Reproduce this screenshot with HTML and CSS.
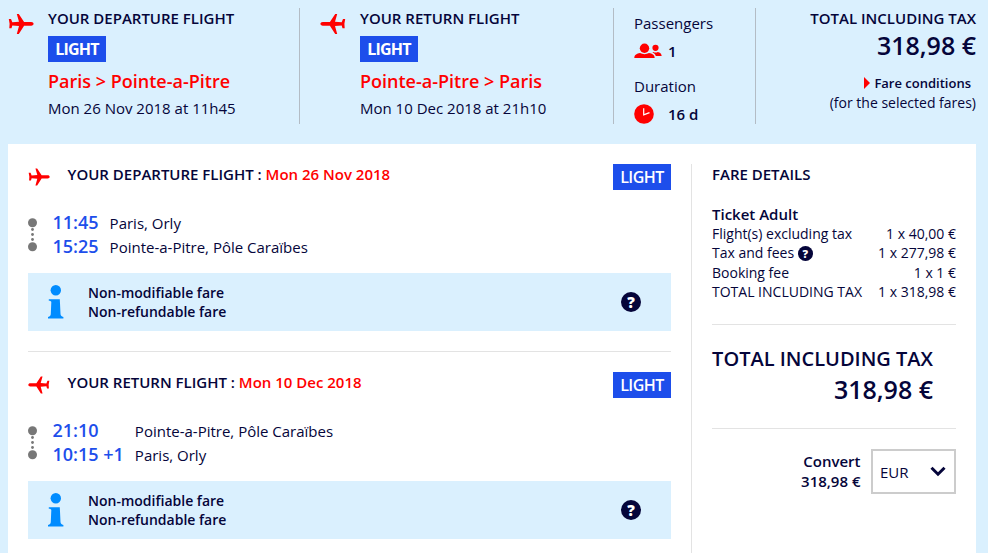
FILE: index.html
```html
<!doctype html>
<html lang="en">
<head>
  <meta charset="utf-8">

  <meta name="viewport" content="width=device-width, initial-scale=1">

  <title>Your flights</title>

  <link rel="stylesheet" href="styles.css">

</head>
<body>

  <svg class="sprite" width="0" height="0">
    <symbol id="plane" viewBox="0 0 26 20">
      <path d="M.8 5h2.200l1.300 3.300 6.700-.6L8.800 0h2l5.300 7.900h7.100c1.500 0 2.400.8 2.400 1.900s-.9 1.900-2.400 1.900h-7.100L10.800 20h-2L11 12l-6.700-.6-.8 2.800H1.300l.3-4.400z"/>
    </symbol>
    <symbol id="people" viewBox="0 0 28 16">
      <circle cx="10.500" cy="5.200" r="4.700"/>
      <path d="M.3 15c.2-3.300 2.600-4.200 5.700-4.900 2.500 1.500 6.500 1.500 9 0 3.100.7 5.500 1.600 5.700 4.900z"/>
      <circle cx="21.500" cy="4.800" r="3.100"/>
      <path d="M18.300 9.600l1.200-.7c1.400.8 3 .8 4.300 0 2.300.5 3.700 1.500 3.900 4.100h-5.900c-.6-1.800-1.700-2.800-3.500-3.400z"/>
    </symbol>
    <symbol id="info" viewBox="0 0 16 34">
      <circle cx="7.800" cy="5.300" r="5.200"/>
      <path d="M.8 14.300h11l.7 14.500c.1 1.900.8 2.500 2.900 3.200v1.500H0v-1.500c2.200-.7 2.700-1.300 2.800-3.200l.5-11.500c0-1-.8-1.500-2.500-1.500z"/>
    </symbol>
    <symbol id="steps" viewBox="0 0 9 34">
      <circle cx="4.500" cy="4.700" r="4.500"/>
      <circle cx="4.500" cy="11.500" r="1.400"/>
      <circle cx="4.500" cy="16.500" r="1.400"/>
      <circle cx="4.500" cy="21.500" r="1.400"/>
      <circle cx="4.500" cy="28.700" r="4.500"/>
    </symbol>
  </svg>

  <header class="summary">
    <section class="trip">
      <svg class="plane"><use href="#plane"/></svg>
      <div>
        <h2 class="title">YOUR DEPARTURE FLIGHT</h2>
        <span class="badge strong">LIGHT</span>
        <p class="route">Paris &gt; Pointe-a-Pitre</p>
        <p class="date">Mon 26 Nov 2018 at 11h45</p>
      </div>
    </section>
    <section class="trip trip-return">
      <svg class="plane flip"><use href="#plane"/></svg>
      <div>
        <h2 class="title">YOUR RETURN FLIGHT</h2>
        <span class="badge strong">LIGHT</span>
        <p class="route">Pointe-a-Pitre &gt; Paris</p>
        <p class="date">Mon 10 Dec 2018 at 21h10</p>
      </div>
    </section>
    <section class="infos">
      <p>Passengers</p>
      <p class="value"><svg class="people"><use href="#people"/></svg>1</p>
      <p class="duration">Duration</p>
      <p class="value">
        <svg class="clock" viewBox="0 0 20 20"><circle cx="10" cy="10" r="9.800"/><path d="M9.700 4.200v6.600l5.800-2.200"/></svg>16 d
      </p>
    </section>
    <section class="total">
      <h2 class="title">TOTAL INCLUDING TAX</h2>
      <p class="amount">318,98 €</p>
      <p class="conditions"><a href="#">Fare conditions</a></p>
      <p class="selected">(for the selected fares)</p>
    </section>
  </header>

  <main class="panel">
    <div class="flights">
      <section class="flight">
        <div class="flight-head">
          <svg class="plane"><use href="#plane"/></svg>
          <h3 class="title">YOUR DEPARTURE FLIGHT : <span class="red">Mon 26 Nov 2018</span></h3>
          <span class="badge">LIGHT</span>
        </div>
        <div class="steps">
          <svg class="line"><use href="#steps"/></svg>
          <div class="times"><div>11:45</div><div>15:25</div></div>
          <div class="places"><div>Paris, Orly</div><div>Pointe-a-Pitre, Pôle Caraïbes</div></div>
        </div>
        <div class="note">
          <svg class="info"><use href="#info"/></svg>
          <p>Non-modifiable fare<br>Non-refundable fare</p>
          <span class="help">?</span>
        </div>
      </section>

      <section class="flight">
        <div class="flight-head">
          <svg class="plane flip"><use href="#plane"/></svg>
          <h3 class="title">YOUR RETURN FLIGHT : <span class="red">Mon 10 Dec 2018</span></h3>
          <span class="badge">LIGHT</span>
        </div>
        <div class="steps">
          <svg class="line"><use href="#steps"/></svg>
          <div class="times"><div>21:10</div><div>10:15 +1</div></div>
          <div class="places"><div>Pointe-a-Pitre, Pôle Caraïbes</div><div>Paris, Orly</div></div>
        </div>
        <div class="note">
          <svg class="info"><use href="#info"/></svg>
          <p>Non-modifiable fare<br>Non-refundable fare</p>
          <span class="help">?</span>
        </div>
      </section>
    </div>

    <aside class="fare">
      <h3 class="title">FARE DETAILS</h3>
      <h4 class="ticket">Ticket Adult</h4>
      <dl class="prices">
        <dt>Flight(s) excluding tax</dt><dd>1 x 40,00 €</dd>
        <dt>Tax and fees <span class="help help-small">?</span></dt><dd>1 x 277,98 €</dd>
        <dt>Booking fee</dt><dd>1 x 1 €</dd>
        <dt>TOTAL INCLUDING TAX</dt><dd>1 x 318,98 €</dd>
      </dl>
      <div class="grand-total">
        <p>TOTAL INCLUDING TAX</p>
        <p class="amount">318,98 €</p>
      </div>
      <div class="convert">
        <p>Convert<br>318,98 €</p>
        <button class="currency">EUR
          <svg class="chevron" viewBox="0 0 16 11"><path d="M1.500 1.800L8 8.200l6.500-6.400"/></svg>
        </button>
      </div>
    </aside>
  </main>

</body>
</html>
```
FILE: styles.css
```css
* {
  box-sizing: border-box;
}

html {
  overflow: hidden;
}

body {
  margin: 0;
  padding: 8px 12px 0 8px;
  height: 553px;
  overflow: hidden;
  background: #daf0fe;
  color: #05053a;
  font: 15px/20px "Open Sans", sans-serif;
}

h2, h3, h4, p, dl, dd {
  margin: 0;
}

svg {
  display: block;
  flex: none;
  fill: red;
}

.sprite {
  position: absolute;
}

.title {
  font-size: 15px;
  font-weight: 600;
  line-height: 20px;
}

.red {
  color: red;
}

.badge {
  display: block;
  width: 58px;
  height: 26px;
  background: #1d4eeb;
  color: #fff;
  font-size: 16px;
  font-weight: 600;
  letter-spacing: -0.5px;
  line-height: 26px;
  text-align: center;
}

.strong {
  font-weight: 700;
  letter-spacing: -0.8px;
}

/* summary */

.summary {
  display: grid;
  grid-template-columns: 292px 314px 142px 1fr;
  height: 116px;
}

.trip {
  display: flex;
  border-right: 1px solid #b3bcc5;
}

.trip-return {
  padding-left: 20px;
}

.summary .plane {
  width: 26px;
  height: 20px;
  margin: 6px 14px 0 0;
}

.flip {
  transform: scaleX(-1);
}

.trip .badge {
  margin-top: 8px;
}

.route {
  margin-top: 7px;
  color: red;
  font-size: 18px;
  font-weight: 600;
  line-height: 24px;
}

.date {
  margin-top: 5px;
}

.infos {
  padding: 5px 0 0 20px;
  border-right: 1px solid #b3bcc5;
}

.value {
  display: flex;
  align-items: center;
  height: 20px;
  margin-top: 8px;
  font-weight: 600;
}

.people {
  width: 28px;
  height: 16px;
  margin-right: 6px;
}

.duration {
  margin-top: 15px;
}

.clock {
  width: 20px;
  height: 20px;
  margin-right: 14px;
}

.clock path {
  fill: none;
  stroke: #fff;
  stroke-width: 1.2;
}

.total {
  margin-right: -8px;
  padding-right: 8px;
  text-align: right;
}

.amount {
  font-size: 25px;
  font-weight: 600;
  line-height: 32px;
}

.total .amount {
  margin-top: 1px;
}

.conditions {
  margin-top: 13px;
  padding-right: 5px;
  font-size: 13px;
  font-weight: 600;
  line-height: 19px;
}

.conditions a {
  color: inherit;
  text-decoration: none;
}

.conditions a:before {
  content: '';
  display: inline-block;
  margin-right: 4px;
  border: 6px solid transparent;
  border-left-color: red;
  border-right: 0;
  vertical-align: -1px;
}

.selected {
  font-size: 14px;
}

/* panel */

.panel {
  display: flex;
  width: 968px;
  height: 420px;
  margin-top: 20px;
  padding: 20px 20px 0;
  background: #fff;
}

.flights {
  width: 643px;
  margin-right: 20px;
}

.flight {
  height: 187px;
}

.flight + .flight {
  height: auto;
  padding-top: 20px;
  border-top: 1px solid #e3e3e3;
}

.flight-head {
  display: flex;
  height: 26px;
}

.flight-head .plane {
  width: 22px;
  height: 18px;
  margin: 4px 17.500px 0 0;
}

.flight-head .badge {
  margin-left: auto;
}

.steps {
  display: flex;
  margin-top: 20px;
  line-height: 24px;
}

.line {
  width: 9px;
  height: 34px;
  margin: 8px 15.500px 0 0;
  fill: #777;
}

.times {
  margin-right: 11px;
  color: #1d4eeb;
  font-size: 18px;
  font-weight: 600;
}

.places {
  padding-top: 1px;
}

.note {
  display: flex;
  align-items: center;
  height: 58px;
  margin-top: 14px;
  padding: 0 30px 0 20px;
  background: #daf0fe;
  font-size: 14px;
  font-weight: 600;
  line-height: 19px;
}

.info {
  width: 16px;
  height: 34px;
  margin-right: 24px;
  fill: #008cff;
}

.help {
  width: 20px;
  height: 20px;
  margin-left: auto;
  border-radius: 50%;
  background: #05053a;
  color: #fff;
  font-size: 15px;
  font-weight: 800;
  line-height: 20px;
  text-align: center;
}

/* fare details */

.fare {
  width: 265px;
  padding-left: 20px;
  border-left: 1px solid #e3e3e3;
}

.ticket {
  margin-top: 20px;
  font-size: 15px;
  font-weight: 600;
}

.prices {
  display: grid;
  grid-template-columns: auto auto;
  justify-content: space-between;
  grid-auto-rows: 19.400px;
  height: 101px;
  border-bottom: 1px solid #e3e3e3;
  font-size: 14px;
}

.prices dd {
  text-align: right;
}

.help-small {
  display: inline-block;
  width: 15px;
  height: 15px;
  font-size: 11px;
  line-height: 15px;
}

.grand-total {
  height: 104px;
  padding: 20px 23px 0 0;
  border-bottom: 1px solid #e3e3e3;
  font-size: 20px;
  font-weight: 600;
  line-height: 28px;
  text-align: right;
  white-space: nowrap;
}

.convert {
  display: flex;
  justify-content: flex-end;
  margin-top: 20px;
  font-weight: 600;
  text-align: right;
}

.convert p {
  margin: 2px 10.500px 0 0;
}

.currency {
  display: flex;
  align-items: center;
  justify-content: space-between;
  width: 85px;
  height: 45px;
  padding: 0 8px 0 7px;
  border: 2px solid #ccc;
  background: #fff;
  color: inherit;
  font: 15px "Open Sans", sans-serif;
}

.chevron {
  width: 16px;
  height: 11px;
}

.chevron path {
  fill: none;
  stroke: #05053a;
  stroke-width: 3;
}
```
